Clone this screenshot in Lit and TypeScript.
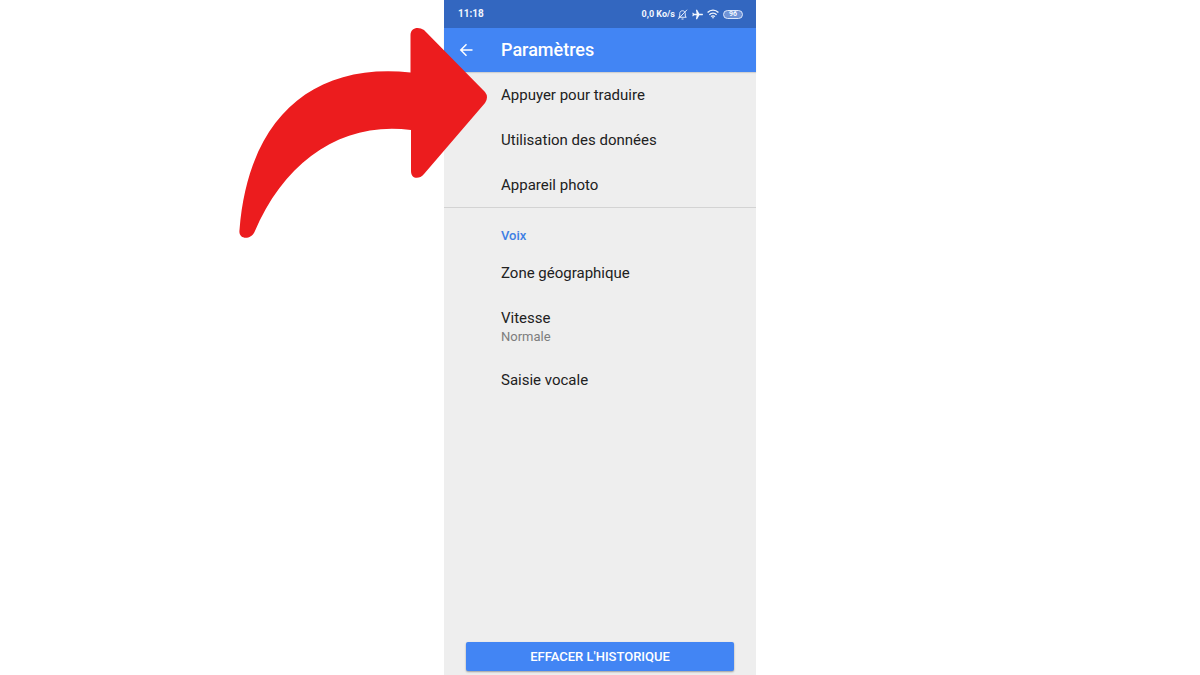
import { LitElement, html, css, nothing } from "lit";
import { customElement, property } from "lit/decorators.js";
import { classMap } from "lit/directives/class-map.js";

interface Setting {
  label: string;
  value?: string;
}

const GENERAL: Setting[] = [
  { label: "Appuyer pour traduire" },
  { label: "Utilisation des données" },
  { label: "Appareil photo" },
];

const VOICE: Setting[] = [
  { label: "Zone géographique" },
  { label: "Vitesse", value: "Normale" },
  { label: "Saisie vocale" },
];

@customElement("status-bar")
class StatusBar extends LitElement {
  static styles = css`
    :host {
      display: flex;
      align-items: center;
      justify-content: space-between;
      height: 28px;
      padding: 0 13px 0 14px;
      background: #3367c0;
      color: #f2f6fd;
      font-weight: 700;
      font-size: 10px;
      line-height: 14px;
    }
    .tray {
      display: flex;
      align-items: center;
      gap: 2px;
    }
    .rate {
      font-size: 9px;
    }
    .signals {
      display: flex;
      align-items: center;
      gap: 4px;
    }
    svg {
      display: block;
    }
    .battery {
      box-sizing: border-box;
      width: 20px;
      height: 9px;
      border: 1px solid #dce7fa;
      border-radius: 5px;
      background: #6f93d6;
      font-size: 7px;
      line-height: 7px;
      text-align: center;
    }
  `;

  render() {
    return html`
      <time>11:18</time>
      <div class="tray">
        <span class="rate">0,0 Ko/s</span>
        <div class="signals">
          <svg width="11" height="11" viewBox="0 0 22 22" fill="none" stroke="#e6eefc" stroke-width="2" aria-label="Silencieux">
            <path d="M3.500 16.500h15l-2-2.500V9c0-3-2-5.500-5.500-5.500S5.500 6 5.500 9v5z" />
            <path d="M9 20h4M20 1.500L2 20.500" />
          </svg>
          <svg width="11" height="11" viewBox="0 0 22 22" fill="#f2f6fd" aria-label="Mode avion">
            <path d="M1 9.600h6.300L11.800 1.500h2.400l-1.400 8.100h5l2-2.300h1.600L20.500 11l.9 3.700h-1.600l-2-2.300h-5l1.400 8.100h-2.400L7.300 12.400H1c-1.200 0-1.200-2.800 0-2.800z" transform="matrix(-1 0 0 1 22 0)" />
          </svg>
          <svg width="12" height="10" viewBox="0 0 24 20" fill="none" stroke="#f2f6fd" stroke-width="2.800" aria-label="Wi-Fi">
            <path d="M1.200 7c6-6.300 15.600-6.300 21.600 0M4.800 11.300c4-4.200 10.400-4.200 14.400 0M8.300 15.300c2-2.200 5.400-2.200 7.400 0" />
            <path d="M9.500 16.300h5L12 19.500z" fill="#f2f6fd" stroke="none" />
          </svg>
          <div class="battery">96</div>
        </div>
      </div>
    `;
  }
}

@customElement("settings-list")
class SettingsList extends LitElement {
  @property({ attribute: false }) items: Setting[] = [];

  static styles = css`
    :host {
      display: block;
    }
    ul {
      margin: 0;
      padding: 0;
      list-style: none;
    }
    .item {
      display: block;
      width: 100%;
      margin: 0;
      padding: 14px 16px 13px 57px;
      border: 0;
      background: none;
      color: #212121;
      font: inherit;
      font-size: 15px;
      line-height: 18px;
      text-align: left;
      cursor: pointer;
    }
    .detailed {
      padding-bottom: 10px;
    }
    .label,
    .value {
      display: block;
    }
    .value {
      color: #7d7d7d;
      font-size: 13px;
      line-height: 20px;
    }
  `;

  render() {
    return html`
      <ul>
        ${this.items.map(
          (item) => html`
            <li>
              <button type="button" class=${classMap({ item: true, detailed: !!item.value })}>
                <span class="label">${item.label}</span>
                ${item.value ? html`<span class="value">${item.value}</span>` : nothing}
              </button>
            </li>
          `
        )}
      </ul>
    `;
  }
}

@customElement("app-root")
class AppRoot extends LitElement {
  static styles = css`
    :host {
      display: flex;
      justify-content: center;
      min-height: 100vh;
      overflow: hidden;
      background: #fff;
      font-family: Roboto, "Liberation Sans", sans-serif;
    }
    .phone {
      position: relative;
      display: flex;
      flex-direction: column;
      width: 100%;
      max-width: 312px;
      background: #eee;
    }
    header {
      display: flex;
      align-items: center;
      gap: 26px;
      height: 44px;
      padding: 0 14px;
      background: #4285f4;
      box-shadow: 0 1px 1px rgba(0, 0, 0, 0.12);
      color: #fff;
    }
    .back {
      padding: 0;
      border: 0;
      background: none;
      color: inherit;
      cursor: pointer;
    }
    .back svg {
      display: block;
    }
    h1 {
      margin: 0;
      font-size: 18px;
      line-height: 24px;
      font-weight: 500;
    }
    main {
      flex: 1;
    }
    .group + .group {
      border-top: 1px solid #d3d3d3;
      padding-top: 19px;
    }
    h2 {
      margin: 0;
      padding: 0 16px 5px 57px;
      color: #4080e4;
      font-size: 13px;
      line-height: 18px;
      font-weight: 500;
    }
    footer {
      display: flex;
      padding: 0 22px 4px;
    }
    .clear {
      flex: 1;
      height: 29px;
      padding: 0;
      border: 0;
      border-radius: 2px;
      background: #4285f4;
      box-shadow: 0 1px 2px rgba(0, 0, 0, 0.35);
      color: #fff;
      font: inherit;
      font-size: 13px;
      line-height: 18px;
      font-weight: 500;
      cursor: pointer;
    }
    .pointer {
      position: absolute;
      top: 27px;
      right: calc(100% - 45px);
      pointer-events: none;
    }
  `;

  render() {
    return html`
      <div class="phone">
        <status-bar></status-bar>
        <header>
          <button class="back" type="button" aria-label="Retour">
            <svg width="17" height="17" viewBox="0 0 17 17" fill="none" stroke="currentColor" stroke-width="1.500">
              <path d="M14.500 8H3M8.500 2.300L2.800 8l5.700 5.700" />
            </svg>
          </button>
          <h1>Paramètres</h1>
        </header>
        <main>
          <section class="group">
            <settings-list .items=${GENERAL}></settings-list>
          </section>
          <section class="group">
            <h2>Voix</h2>
            <settings-list .items=${VOICE}></settings-list>
          </section>
        </main>
        <footer>
          <button class="clear" type="button">EFFACER L'HISTORIQUE</button>
        </footer>
        <svg class="pointer" width="250" height="212" viewBox="0 0 250 212" fill="#ec1c1e" aria-hidden="true">
          <path
            d="M171.500 8C171.500 1 179-1 185 3L246 65Q250 70 246 76L185 147C180 153 172 152 172 144V103C104 94 46 133 15.500 205C12 213-1 213 .5 203C9 93 72 35 171.500 45.500Z"
          />
        </svg>
      </div>
    `;
  }
}
